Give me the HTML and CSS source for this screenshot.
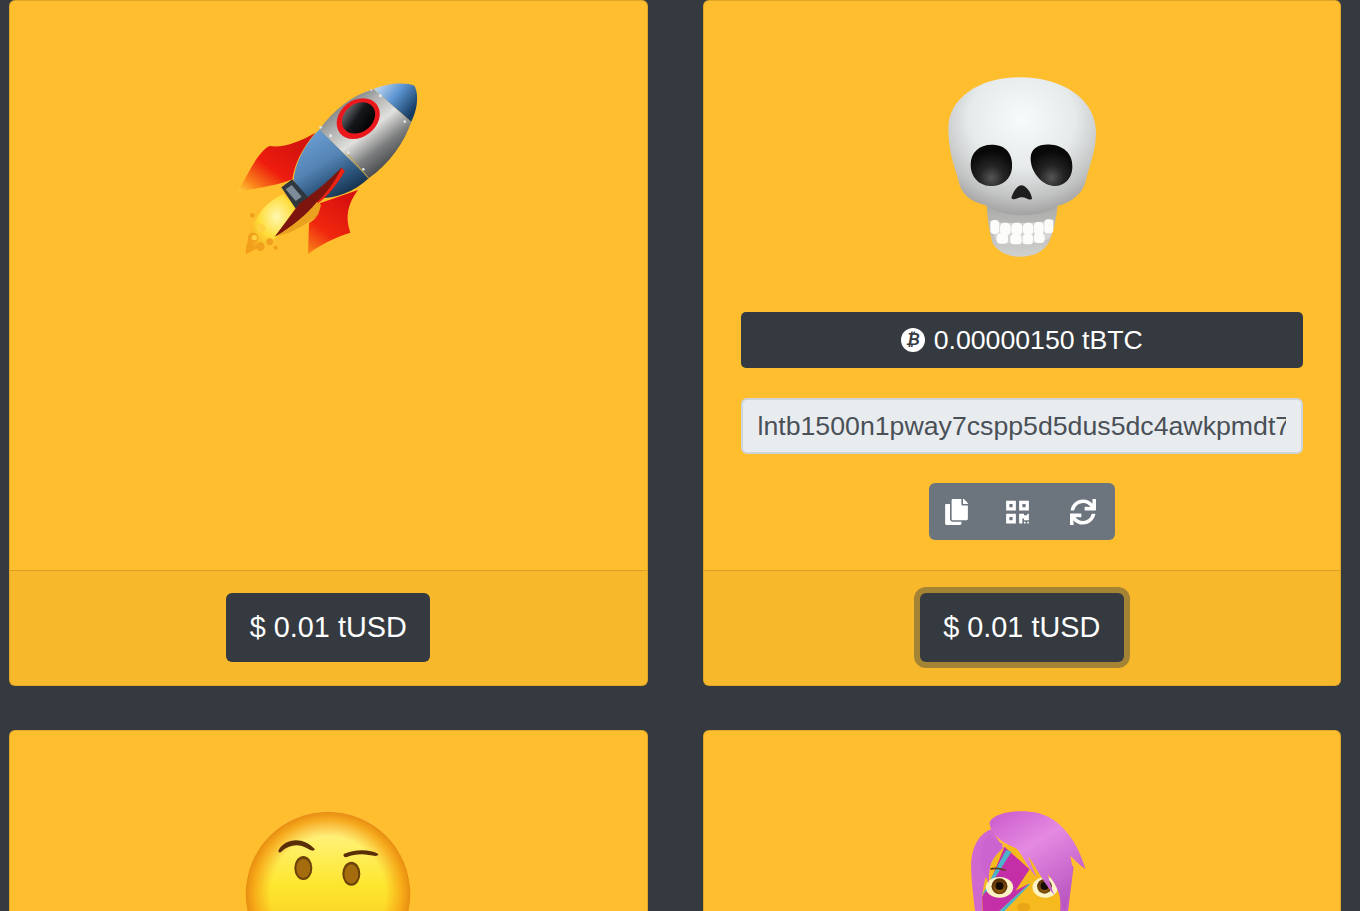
FILE: index.html
```html
<!DOCTYPE html>
<html lang="en">
<head>
<meta charset="utf-8">
<title>Lightning paywall emoji</title>
<link rel="stylesheet" href="styles.css">
</head>
<body>
<main class="grid">
  <article class="card">
    <div class="card-body">
      <svg class="emoji" viewBox="25 0 600 600" aria-label="rocket">
        <defs>
          <linearGradient id="finL" x1="0" y1="1" x2="0.75" y2="0.25"><stop offset="0" stop-color="#ffd23c"/><stop offset=".22" stop-color="#f9801a"/><stop offset=".55" stop-color="#ee1c0e"/><stop offset="1" stop-color="#d6140e"/></linearGradient>
          <linearGradient id="finR" x1="0" y1="1" x2="0.6" y2="0"><stop offset="0" stop-color="#f98a1a"/><stop offset=".4" stop-color="#f0280e"/><stop offset="1" stop-color="#d8100e"/></linearGradient>
          <linearGradient id="rear" x1="0.2" y1="0.1" x2="0.75" y2="0.95"><stop offset="0" stop-color="#6a9bd0"/><stop offset=".42" stop-color="#5484b4"/><stop offset=".72" stop-color="#2d567e"/><stop offset="1" stop-color="#122e48"/></linearGradient>
          <linearGradient id="silver" x1="0.22" y1="0.12" x2="0.82" y2="0.88"><stop offset="0" stop-color="#75777a"/><stop offset=".22" stop-color="#aeafae"/><stop offset=".48" stop-color="#e0e0dd"/><stop offset=".72" stop-color="#7c7d7e"/><stop offset="1" stop-color="#383b40"/></linearGradient>
          <linearGradient id="nose" x1="0.05" y1="0.15" x2="0.9" y2="0.75"><stop offset="0" stop-color="#b9d3ec"/><stop offset=".45" stop-color="#5d95d2"/><stop offset="1" stop-color="#163c62"/></linearGradient>
          <radialGradient id="flame" cx=".62" cy=".38" r=".72"><stop offset="0" stop-color="#fff8b0"/><stop offset=".5" stop-color="#ffdc38"/><stop offset="1" stop-color="#f39a18"/></radialGradient>
          <linearGradient id="glass" x1="0.3" y1="0" x2="0.7" y2="1"><stop offset="0" stop-color="#6a6c70"/><stop offset=".45" stop-color="#17181b"/><stop offset="1" stop-color="#000"/></linearGradient>
        </defs>
        <path d="M55 365C90 300 120 240 150 228C190 235 240 215 288 188C250 230 225 280 218 328C180 344 130 352 55 365Z" fill="url(#finL)"/>
        <path d="M265 552L268 460C285 450 292 430 300 400L415 360C385 400 375 440 392 488C350 500 300 525 265 552Z" fill="url(#finR)"/>
        <path d="M78 552C80 515 95 470 120 430C140 400 170 382 190 372L228 410L172 500C150 520 110 535 78 552Z" fill="url(#flame)"/>
        <g fill="#f0a01c">
          <circle cx="98" cy="436" r="7"/><circle cx="168" cy="533" r="6"/>
          <circle cx="100" cy="503" r="15"/><circle cx="122" cy="530" r="13"/><circle cx="92" cy="530" r="12"/><circle cx="150" cy="515" r="10"/>
        </g>
        <g fill="#ffd040"><circle cx="124" cy="475" r="13"/><circle cx="104" cy="503" r="8"/></g>
        <path d="M300 178C260 215 225 280 222 330L250 380C310 395 390 380 447 325Z" fill="url(#rear)"/>
        <path d="M300 178C340 120 400 75 462 57L575 155C555 215 510 280 447 325Z" fill="url(#silver)"/>
        <path d="M378 245L447 325" stroke="#c7a73a" stroke-width="3"/>
        <path d="M462 57C500 40 560 35 585 48C600 80 590 125 575 155Z" fill="url(#nose)"/>
        <path d="M185 352L218 328L268 385L228 416Z" fill="#2f363c"/>
        <path d="M198 358L216 345L246 380L228 393Z" fill="#7d8b98"/>
        <path d="M165 500L240 400C280 370 320 340 365 293L375 303C352 345 322 380 296 398C260 440 210 480 165 500Z" fill="#7e140e"/>
        <path d="M288 400C322 370 345 335 366 294L375 303C352 345 322 380 296 398L278 430Z" fill="#ee2414"/>
        <path d="M170 498C215 470 255 440 292 396L304 404C298 430 292 448 268 458L300 430C270 455 225 490 170 498Z" fill="#e9a11f"/>
        <g transform="rotate(-38 415 145)">
          <ellipse cx="415" cy="146" rx="70" ry="55" fill="#ea181c"/>
          <ellipse cx="417" cy="145" rx="54" ry="42" fill="url(#glass)"/>
        </g>
        <g fill="#dfe1e3">
          <circle cx="333" cy="197" r="5"/><circle cx="385" cy="248" r="5"/><circle cx="431" cy="298" r="4"/>
          <circle cx="482" cy="77" r="5"/><circle cx="522" cy="118" r="5"/><circle cx="555" cy="155" r="4"/><circle cx="303" cy="172" r="4"/><circle cx="455" cy="60" r="3"/>
        </g>
      </svg>
    </div>
    <div class="card-footer"><button class="btn-price">$ 0.01 tUSD</button></div>
  </article>

  <article class="card">
    <div class="card-body">
      <svg class="emoji" viewBox="6 0 540 600" aria-label="skull">
        <defs>
          <radialGradient id="bone" cx=".5" cy=".3" r=".72"><stop offset="0" stop-color="#f7fbfc"/><stop offset=".5" stop-color="#e6eaeb"/><stop offset=".8" stop-color="#c2c3c3"/><stop offset="1" stop-color="#9d9d9c"/></radialGradient>
          <linearGradient id="jaw" x1="0" y1="0" x2="0" y2="1"><stop offset="0" stop-color="#a9a9a8"/><stop offset="1" stop-color="#d0d0cf"/></linearGradient>
          <radialGradient id="socket" cx=".5" cy=".8" r=".65"><stop offset="0" stop-color="#555"/><stop offset=".45" stop-color="#242424"/><stop offset="1" stop-color="#080808"/></radialGradient>
        </defs>
        <path d="M170 400C172 440 176 480 188 520C205 548 235 560 270 560C305 560 340 548 358 515C372 480 380 440 384 400Z" fill="url(#jaw)"/>
        <path d="M55 175C55 90 140 22 270 22C400 22 500 90 498 190C498 240 480 280 468 330C460 368 430 395 382 408C340 445 220 445 165 405C120 395 92 370 85 330C70 280 55 240 55 175Z" fill="url(#bone)"/>
        <path d="M122 285C122 245 150 222 190 224C230 226 250 255 246 295C242 330 215 350 180 348C145 346 122 320 122 285Z" fill="url(#socket)"/>
        <path d="M302 262C304 232 330 220 365 224C405 228 430 255 427 295C424 330 400 350 370 348C335 345 300 305 302 262Z" fill="url(#socket)"/>
        <path d="M244 384C250 365 262 346 274 346C288 346 304 368 306 386C298 394 285 380 274 382C264 382 252 394 244 384Z" fill="#1e1e1e"/>
        <path d="M178 452C200 462 340 462 372 448L362 500C345 525 215 530 196 510Z" fill="#d4d4d3"/>
        <g fill="#fcfcfb">
          <rect x="181" y="450" width="27" height="42" rx="12"/><rect x="210" y="458" width="32" height="38" rx="13"/><rect x="244" y="458" width="33" height="38" rx="13"/><rect x="279" y="458" width="31" height="38" rx="13"/><rect x="312" y="456" width="29" height="38" rx="12"/><rect x="343" y="448" width="27" height="42" rx="11"/>
          <rect x="200" y="490" width="34" height="31" rx="11"/><rect x="241" y="493" width="34" height="30" rx="11"/><rect x="278" y="493" width="31" height="30" rx="11"/><rect x="312" y="490" width="32" height="29" rx="11"/>
        </g>
      </svg>
      <div class="balance">
        <span class="btc-icon">₿</span><span>0.00000150 tBTC</span>
      </div>
      <input class="invoice" type="text" readonly value="lntb1500n1pway7cspp5d5dus5dc4awkpmdt7zq8v0m3h6yqf2jrl4s9x">
      <div class="btn-group">
        <button class="tool tool-first" aria-label="copy"><svg class="icon" viewBox="0 0 448 512"><path d="M320 448v40c0 13.255-10.745 24-24 24H24c-13.255 0-24-10.745-24-24V120c0-13.255 10.745-24 24-24h72v296c0 30.879 25.121 56 56 56h168zm0-344V0H152c-13.255 0-24 10.745-24 24v368c0 13.255 10.745 24 24 24h272c13.255 0 24-10.745 24-24V128H344c-13.2 0-24-10.8-24-24zm120.971-31.029L375.029 7.029A24 24 0 0 0 358.059 0H352v96h96v-6.059a24 24 0 0 0-7.029-16.97z"/></svg></button>
        <button class="tool" aria-label="qr code"><svg class="icon" viewBox="0 0 448 512"><path d="M0 224h192V32H0v192zM64 96h64v64H64V96zm192-64v192h192V32H256zm128 128h-64V96h64v64zM0 480h192V288H0v192zm64-128h64v64H64v-64zm352-64h32v128h-96v-32h-32v96h-64V288h96v32h64v-32zm0 160h32v32h-32v-32zm-64 0h32v32h-32v-32z"/></svg></button>
        <button class="tool" aria-label="refresh"><svg class="icon" viewBox="0 0 512 512"><path d="M440.65 12.57l4 82.77A247.16 247.16 0 0 0 255.83 8C134.73 8 33.91 94.92 12.29 209.82A12 12 0 0 0 24.09 224h49.05a12 12 0 0 0 11.67-9.26 175.91 175.91 0 0 1 317-56.94l-101.46-4.86a12 12 0 0 0-12.57 12v47.41a12 12 0 0 0 12 12H500a12 12 0 0 0 12-12V12a12 12 0 0 0-12-12h-47.37a12 12 0 0 0-11.98 12.57zM255.83 432a175.61 175.61 0 0 1-146-77.8l101.8 4.87a12 12 0 0 0 12.57-12v-47.4a12 12 0 0 0-12-12H12a12 12 0 0 0-12 12V500a12 12 0 0 0 12 12h47.35a12 12 0 0 0 12-12.6l-4.15-82.57A247.17 247.17 0 0 0 255.83 504c121.11 0 221.93-86.92 243.55-201.82a12 12 0 0 0-11.8-14.18h-49.05a12 12 0 0 0-11.67 9.26A175.86 175.86 0 0 1 255.83 432z"/></svg></button>
      </div>
    </div>
    <div class="card-footer"><button class="btn-price btn-focus">$ 0.01 tUSD</button></div>
  </article>

  <article class="card">
    <div class="card-body">
      <svg class="emoji" viewBox="-7 0 600 600" aria-label="face with raised eyebrow">
        <defs>
          <linearGradient id="skin" x1="0" y1="0" x2="0" y2="1"><stop offset="0" stop-color="#ffeea0"/><stop offset=".2" stop-color="#fff06a"/><stop offset=".45" stop-color="#fde62e"/><stop offset="1" stop-color="#fbb51c"/></linearGradient>
          <radialGradient id="rim" cx=".5" cy=".5" r=".5"><stop offset=".7" stop-color="#f6a516" stop-opacity="0"/><stop offset=".9" stop-color="#f6a516" stop-opacity=".9"/><stop offset="1" stop-color="#e88c10"/></radialGradient>
        </defs>
        <circle cx="293" cy="282" r="247" fill="url(#skin)"/>
        <circle cx="293" cy="282" r="247" fill="url(#rim)"/>
        <path d="M145 150C165 115 218 108 254 148C248 156 238 150 230 145C205 130 175 134 152 156C146 160 143 156 145 150Z" fill="#5a2f08"/>
        <path d="M340 162C370 148 418 146 444 162C442 171 430 167 415 165C395 161 370 163 350 171C342 173 338 168 340 162Z" fill="#5a2f08"/>
        <ellipse cx="219" cy="204" rx="27" ry="36" fill="#6b4108"/>
        <ellipse cx="219" cy="205" rx="21" ry="29" fill="#a56c0e"/>
        <ellipse cx="363" cy="221" rx="27" ry="36" fill="#6b4108"/>
        <ellipse cx="363" cy="222" rx="21" ry="29" fill="#a56c0e"/>
      </svg>
    </div>
  </article>

  <article class="card">
    <div class="card-body">
      <svg class="emoji" viewBox="-82.5 0 600 600" aria-label="singer">
        <defs>
          <linearGradient id="hair" x1="0.2" y1="0" x2="0.8" y2="1"><stop offset="0" stop-color="#cf62cf"/><stop offset=".35" stop-color="#e48ae2"/><stop offset="1" stop-color="#b54fbd"/></linearGradient>
          <radialGradient id="iris" cx=".5" cy=".6" r=".5"><stop offset="0" stop-color="#b57a14"/><stop offset="1" stop-color="#5a3207"/></radialGradient>
        </defs>
        <path d="M65 200C65 140 90 100 125 88L200 200L110 333L100 420L82 380C72 290 65 240 65 200Z" fill="#cf69d0"/>
        <path d="M320 160L372 200L345 420L310 420Z" fill="#c15bc6"/>
        <path d="M100 360C88 260 120 150 190 130C270 120 330 210 332 300C336 360 320 420 220 430C150 430 108 400 100 360Z" fill="#f6ba1e"/>
        <path d="M165 140L240 208L198 272L240 250L150 333L100 360L98 290L120 250Z" fill="#c42fa8"/>
        <path d="M170 150L186 155L110 275L98 285ZM240 250L150 333L165 333L240 255Z" fill="#4bb4c8"/>
        <path d="M122 205C135 200 155 202 170 210L168 213C150 207 135 207 124 210Z" fill="#5e3b1a"/>
        <ellipse cx="150" cy="262" rx="41" ry="31" fill="#fdf4c6"/>
        <circle cx="150" cy="259" r="24" fill="url(#iris)"/><circle cx="150" cy="258" r="12" fill="#150c04"/>
        <ellipse cx="287" cy="262" rx="38" ry="31" fill="#fdf4c6"/>
        <circle cx="285" cy="259" r="22" fill="url(#iris)"/><circle cx="285" cy="258" r="12" fill="#150c04"/>
        <ellipse cx="222" cy="322" rx="20" ry="14" fill="#e9a616"/>
        <path d="M120 70C125 45 180 30 240 35C320 40 380 110 408 207C385 192 372 175 362 168C378 220 358 290 345 333L330 285C322 260 310 240 295 222C300 245 305 265 315 285C288 258 262 205 236 168C245 195 250 205 262 232C235 205 220 165 200 145C165 130 125 110 120 70Z" fill="url(#hair)"/>
        <path d="M120 100C100 120 90 160 95 200L118 250C118 200 125 170 150 150L160 132C140 125 128 115 120 100Z" fill="#cc64cf"/>
      </svg>
    </div>
  </article>
</main>
</body>
</html>
```

FILE: styles.css
```css
* { box-sizing: border-box; }

html, body {
  margin: 0;
  height: 911px;
  overflow: hidden;
  background: #343a40;
}

body {
  font-family: "Liberation Sans", Arial, sans-serif;
  color: #fff;
}

.grid {
  display: grid;
  grid-template-columns: 638.5px 638.5px;
  column-gap: 55px;
  row-gap: 44px;
  padding-left: 9px;
  align-items: start;
}

.card {
  background: #ffbe2e;
  border: 1px solid rgba(0, 0, 0, .125);
  border-radius: 6px;
  display: flex;
  flex-direction: column;
  height: 686px;
}

.card-body {
  flex: 1;
  display: flex;
  flex-direction: column;
  align-items: center;
  padding: 69px 37px 30px;
}

.emoji {
  width: 200px;
  height: 200px;
  flex: none;
  display: block;
  filter: blur(.4px);
}

.balance {
  width: 100%;
  height: 56px;
  margin-top: 42px;
  background: #343a40;
  border-radius: 5px;
  display: flex;
  align-items: center;
  justify-content: center;
  gap: 9px;
  font-size: 26.7px;
}

.btc-icon {
  width: 24px;
  height: 24px;
  border-radius: 50%;
  background: #fff;
  color: #343a40;
  font-family: "DejaVu Sans", sans-serif;
  font-size: 16px;
  font-weight: 700;
  font-style: italic;
  line-height: 24px;
  text-align: center;
}

.invoice {
  width: 100%;
  height: 56px;
  margin-top: 30px;
  padding: 0 15px;
  background: #e9ecef;
  border: 2px solid #ced4da;
  border-radius: 6px;
  color: #495057;
  font-family: inherit;
  font-size: 26.7px;
  outline: none;
}

.btn-group {
  display: flex;
  height: 57px;
  margin-top: 29px;
  background: #6c757d;
  border-radius: 6px;
}

.tool {
  border: 0;
  background: transparent;
  padding: 0 20px;
  display: flex;
  align-items: center;
}

.tool-first { padding: 0 17px 0 16px; }
.tool:last-child { padding-right: 19px; }

.icon {
  height: 26px;
  display: block;
  fill: #fff;
}

.tool:nth-child(1) .icon { width: 23px; }
.tool:nth-child(2) .icon { width: 25px; }
.tool:nth-child(3) .icon { width: 26px; }

.card-footer {
  height: 115px;
  flex: none;
  background: rgba(0, 0, 0, .03);
  border-top: 1px solid rgba(0, 0, 0, .125);
  display: flex;
  justify-content: center;
  padding-top: 22px;
  border-radius: 0 0 5px 5px;
}

.btn-price {
  height: 69px;
  width: 204px;
  border: 0;
  border-radius: 6px;
  background: #343a40;
  color: #fff;
  font-family: inherit;
  font-size: 28.8px;
}

.btn-focus {
  box-shadow: 0 0 0 6px rgba(52, 58, 64, .42);
}
```
